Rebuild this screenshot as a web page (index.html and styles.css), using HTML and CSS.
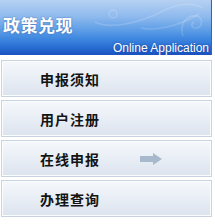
FILE: index.html
```html
<!DOCTYPE html>
<html lang="zh-CN">
<head>
<meta charset="utf-8">
<link rel="stylesheet" href="styles.css">
</head>
<body>
<div class="panel">
  <div class="head">
    <svg class="swirl" width="120" height="40" viewBox="0 0 120 40">
      <g fill="none" stroke="#ffffff" stroke-opacity="0.16" stroke-width="1.5">
        <circle cx="22" cy="14" r="4"/>
        <path d="M4 22 C20 30 50 22 70 12 C85 4 100 2 112 8"/>
        <path d="M50 28 C70 32 95 22 108 14"/>
        <path d="M92 36 C88 24 96 14 106 16 C112 18 112 26 106 28 C101 29 99 24 103 22"/>
      </g>
    </svg>
    <div class="title">政策兑现</div>
    <div class="sub">Online Application</div>
  </div>
  <ul class="menu">
    <li class="item"><span class="label">申报须知</span></li>
    <li class="item"><span class="label">用户注册</span></li>
    <li class="item"><span class="label">在线申报</span>
      <svg class="arrow" width="22" height="12" viewBox="0 0 22 12"><path d="M0 3 H13 V0 L22 6 L13 12 V9 H0 Z" fill="#a9b9cd"/></svg>
    </li>
    <li class="item"><span class="label">办理查询</span></li>
  </ul>
</div>
</body>
</html>
```
FILE: styles.css
```css
html, body {
  margin: 0;
  padding: 0;
  background: #ffffff;
}
.panel {
  width: 212px;
  font-family: "Noto Sans CJK SC", "Liberation Sans", sans-serif;
}
.head {
  position: relative;
  height: 55px;
  box-sizing: border-box;
  border-right: 1px solid #2a66c8;
  background: linear-gradient(#b6d1f2 0%, #8fbaee 30%, #5d9de6 55%, #3f88e0 70%, #2a6fd4 85%, #1a52c0 100%);
  overflow: hidden;
}
.swirl {
  position: absolute;
  right: 0;
  top: 0;
}
.title {
  position: relative;
  padding: 14px 0 0 3px;
  height: 22px;
  line-height: 22px;
  font-size: 17px;
  font-weight: bold;
  color: #ffffff;
  letter-spacing: 0.5px;
  text-shadow: 0 0 2px rgba(30, 70, 140, 0.6);
}
.sub {
  position: relative;
  margin-top: 5px;
  text-align: right;
  padding-right: 2px;
  font-family: "Liberation Sans", Arial, sans-serif;
  font-size: 12px;
  line-height: 14px;
  color: #ffffff;
  text-shadow: 0 0 2px rgba(20, 50, 120, 0.7);
}
.menu {
  list-style: none;
  margin: 5px 0 0 1px;
  padding: 0;
  display: flex;
  flex-direction: column;
  gap: 3px;
}
.item {
  height: 37px;
  box-sizing: border-box;
  border: 1px solid #c9d3df;
  box-shadow: inset 0 0 0 1px #fbfcfe;
  background: linear-gradient(#f5f7fb 0%, #eaeff6 45%, #dbe3ee 100%);
  display: flex;
  align-items: center;
  padding-left: 38px;
}
.label {
  font-size: 14px;
  font-weight: bold;
  letter-spacing: 1px;
  color: #141414;
}
.arrow {
  margin-left: 40px;
}
```
